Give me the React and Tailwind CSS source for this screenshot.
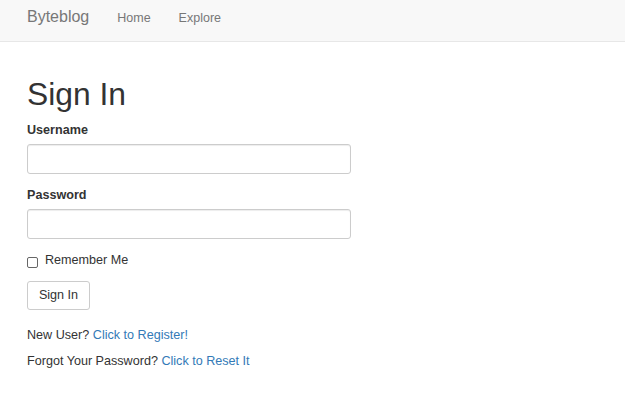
export default function App() {
  return (
    <div className="min-h-screen bg-white font-['Liberation_Sans',Arial,sans-serif] text-[#333]">
      {/* Navbar */}
      <nav className="h-[42px] bg-[#f8f8f8] border-b border-[#e7e7e7] flex items-baseline pl-[27px] pt-[9px]">
        <a href="#" className="text-[16px] leading-[16px] text-[#777]">Byteblog</a>
        <a href="#" className="ml-[28px] text-[12.5px] leading-[16px] text-[#777]">Home</a>
        <a href="#" className="ml-[28px] text-[12.5px] leading-[16px] text-[#777]">Explore</a>
      </nav>

      <main className="px-[27px]">
        <h1 className="mt-[35px] mb-[10px] text-[31.8px] leading-[34.5px] font-normal">Sign In</h1>

        <form onSubmit={(e) => e.preventDefault()}>
          <div className="mb-[12.5px]">
            <label className="block mb-[5px] text-[12.6px] leading-[17.5px] font-bold">Username</label>
            <input type="text" className="block w-[324px] h-[30px] border border-[#ccc] rounded-[3px] px-[10px] text-[12.6px] shadow-[inset_0_1px_1px_rgba(0,0,0,0.075)] outline-none" />
          </div>
          <div>
            <label className="block mb-[5px] text-[12.6px] leading-[17.5px] font-bold">Password</label>
            <input type="password" className="block w-[324px] h-[30px] border border-[#ccc] rounded-[3px] px-[10px] text-[12.6px] shadow-[inset_0_1px_1px_rgba(0,0,0,0.075)] outline-none" />
          </div>

          <label className="mt-[13px] flex items-center text-[12.6px] leading-[17.5px]">
            <input type="checkbox" className="appearance-none w-[11px] h-[11px] border border-[#666] rounded-[2px] bg-white mt-[4px]" />
            <span className="ml-[7px]">Remember Me</span>
          </label>

          <button type="submit" className="mt-[11.5px] w-[63px] h-[29px] border border-[#ccc] rounded-[3px] bg-white text-[12.6px] text-[#333]">
            Sign In
          </button>
        </form>

        <p className="mt-[16.5px] text-[12.6px] leading-[17.5px]">
          New User? <a href="#" className="text-[#337ab7]">Click to Register!</a>
        </p>
        <p className="mt-[8.75px] text-[12.6px] leading-[17.5px]">
          Forgot Your Password? <a href="#" className="text-[#337ab7]">Click to Reset It</a>
        </p>
      </main>
    </div>
  );
}
